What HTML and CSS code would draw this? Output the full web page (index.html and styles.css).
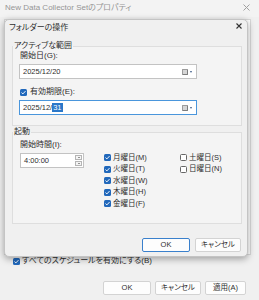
FILE: index.html
```html
<!DOCTYPE html>
<html lang="ja">
<head>
<meta charset="utf-8">
<link rel="stylesheet" href="styles.css">
</head>
<body>
<div class="window">
  <div class="titlebar">
    <span class="title">New Data Collector Setのプロパティ</span>
    <svg class="x-outer" width="7" height="7" viewBox="0 0 7 7"><path d="M0.5 0.5 L6.5 6.5 M6.5 0.5 L0.5 6.5" stroke="#a0a0a0" stroke-width="1"/></svg>
  </div>
  <div class="tabpage"></div>
  <div class="outer-check">
    <span class="cb on"><svg viewBox="0 0 8 8"><path d="M1.7 4.1 L3.3 5.6 L6.3 2.4" stroke="#fff" stroke-width="1.1" fill="none"/></svg></span>
    <span>すべてのスケジュールを有効にする(B)</span>
  </div>
  <div class="footer">
    <button class="btn w48">OK</button>
    <button class="btn w46">キャンセル</button>
    <button class="btn w41">適用(A)</button>
  </div>

  <div class="modal">
    <div class="modal-head">
      <span>フォルダーの操作</span>
      <svg class="x-inner" width="6" height="6" viewBox="0 0 6 6"><path d="M0.5 0.5 L5.5 5.5 M5.5 0.5 L0.5 5.5" stroke="#333" stroke-width="1.1"/></svg>
    </div>

    <fieldset class="group g1">
      <legend>アクティブな範囲</legend>
      <div class="lbl">開始日(G):</div>
      <div class="field date">
        <span class="val">2025/12/20</span>
        <span class="cal"></span>
        <span class="tri"></span>
      </div>
      <div class="chkrow">
        <span class="cb on"><svg viewBox="0 0 8 8"><path d="M1.7 4.1 L3.3 5.6 L6.3 2.4" stroke="#fff" stroke-width="1.1" fill="none"/></svg></span>
        <span>有効期限(E):</span>
      </div>
      <div class="field date focus">
        <span class="val">2025/12/<span class="sel">31</span></span>
        <span class="cal"></span>
        <span class="tri"></span>
      </div>
    </fieldset>

    <fieldset class="group g2">
      <legend>起動</legend>
      <div class="lbl lbl2">開始時間(I):</div>
      <div class="startrow">
        <div class="field time">
          <span class="val">4:00:00</span>
          <span class="spin">
            <span class="sp up"></span>
            <span class="sp down"></span>
          </span>
        </div>
        <div class="days">
          <div class="day"><span class="cb on"><svg viewBox="0 0 8 8"><path d="M1.7 4.1 L3.3 5.6 L6.3 2.4" stroke="#fff" stroke-width="1.1" fill="none"/></svg></span><span>月曜日(M)</span></div>
          <div class="day"><span class="cb on"><svg viewBox="0 0 8 8"><path d="M1.7 4.1 L3.3 5.6 L6.3 2.4" stroke="#fff" stroke-width="1.1" fill="none"/></svg></span><span>火曜日(T)</span></div>
          <div class="day"><span class="cb on"><svg viewBox="0 0 8 8"><path d="M1.7 4.1 L3.3 5.6 L6.3 2.4" stroke="#fff" stroke-width="1.1" fill="none"/></svg></span><span>水曜日(W)</span></div>
          <div class="day"><span class="cb on"><svg viewBox="0 0 8 8"><path d="M1.7 4.1 L3.3 5.6 L6.3 2.4" stroke="#fff" stroke-width="1.1" fill="none"/></svg></span><span>木曜日(H)</span></div>
          <div class="day"><span class="cb on"><svg viewBox="0 0 8 8"><path d="M1.7 4.1 L3.3 5.6 L6.3 2.4" stroke="#fff" stroke-width="1.1" fill="none"/></svg></span><span>金曜日(F)</span></div>
          <div class="day"><span class="cb off"></span><span>土曜日(S)</span></div>
          <div class="day"><span class="cb off"></span><span>日曜日(N)</span></div>
        </div>
      </div>
    </fieldset>

    <div class="modal-btns">
      <button class="btn default w48">OK</button>
      <button class="btn w46">キャンセル</button>
    </div>
  </div>
</div>
</body>
</html>
```

FILE: styles.css
```css
html, body {
  margin: 0;
  padding: 0;
}
body {
  width: 259px;
  height: 300px;
  overflow: hidden;
  background: #f0f0f0;
  font-family: "Liberation Sans", "Noto Sans CJK JP", sans-serif;
  font-size: 8px;
  line-height: 10px;
  color: #2e2e2e;
  font-feature-settings: "palt";
}
.window {
  position: relative;
  height: 300px;
  display: flex;
  flex-direction: column;
}
.titlebar {
  height: 17px;
  flex: none;
  display: flex;
  align-items: center;
  justify-content: space-between;
  padding: 0 9px 2px 5px;
  box-sizing: border-box;
  color: #959595;
  background: #f3f3f3;
}
.tabpage {
  flex: none;
  height: 236px;
  margin: 2px 8px 0 4px;
  box-sizing: border-box;
  background: #ffffff;
  border: 1px solid #d9d9d9;
}
.outer-check {
  flex: none;
  display: flex;
  align-items: center;
  gap: 2px;
  height: 12px;
  margin: 0 0 0 13px;
}
.footer {
  margin-top: auto;
  margin-bottom: 5px;
  display: flex;
  justify-content: flex-end;
  gap: 4px;
  padding-right: 13px;
}
.btn {
  height: 14px;
  padding: 0;
  box-sizing: border-box;
  border: 1px solid #d3d3d3;
  border-radius: 2px;
  background: #fdfdfd;
  font: inherit;
  font-size: 7.5px;
  line-height: 12px;
  color: #2e2e2e;
  font-feature-settings: "palt";
}
.w48 { width: 48px; }
.w46 { width: 46px; }
.w41 { width: 41px; }
.btn.default {
  border-color: #3a80cc;
}

/* checkbox */
.cb {
  width: 7px;
  height: 7px;
  flex: none;
  box-sizing: border-box;
  border-radius: 1.5px;
  display: inline-flex;
}
.cb svg {
  width: 7px;
  height: 7px;
}
.cb.on {
  background: #2168bb;
}
.cb.off {
  background: #ffffff;
  border: 1px solid #666666;
}

/* modal */
.modal {
  position: absolute;
  left: 4px;
  top: 19px;
  width: 244px;
  height: 238px;
  box-sizing: border-box;
  background: #f0f0f0;
  border: 1px solid #c4c4c4;
  border-radius: 5px;
  box-shadow: 0 2px 7px rgba(0, 0, 0, 0.35);
}
.modal-head {
  height: 13px;
  display: flex;
  align-items: center;
  justify-content: space-between;
  padding: 1px 5px 0 4px;
}
.x-inner {
  margin-top: -4px;
}
.group {
  margin: 7px 5px 0 7px;
  padding: 0 6px 10px 6px;
  border: 1px solid #dedede;
  background: #f4f4f4;
  min-width: 0;
}
.group legend {
  padding: 0 1px;
  margin-left: -6px;
  line-height: 10px;
}
.g2 {
  margin-top: 1px;
  padding-bottom: 13px;
}
.lbl {
  height: 10px;
  padding-left: 1px;
}
.lbl2 {
  margin-top: 3px;
}
.field {
  box-sizing: border-box;
  height: 15px;
  background: #ffffff;
  border: 1px solid #c3c3c3;
  display: flex;
  align-items: center;
  padding-left: 3px;
  font-size: 7.5px;
}
.date {
  width: 178px;
  margin-top: 3px;
}
.date.focus {
  border-color: #4a96dc;
}
.val {
  flex: 1;
  line-height: 11px;
}
.sel {
  background: #2a78c9;
  color: #ffffff;
  padding: 0 1px;
}
.cal {
  width: 6px;
  height: 6px;
  box-sizing: border-box;
  border: 1px solid #9c9c9c;
  border-right-color: #7d7d7d;
  border-bottom-color: #7d7d7d;
  background: #d6d6d6;
  border-radius: 1px;
}
.tri {
  width: 0;
  height: 0;
  margin: 0 4px 0 2px;
  border-left: 1.5px solid transparent;
  border-right: 1.5px solid transparent;
  border-top: 2px solid #3b5a86;
}
.chkrow {
  margin-top: 8px;
  height: 10px;
  display: flex;
  align-items: center;
  gap: 3px;
  padding-left: 1px;
}
.startrow {
  display: flex;
  align-items: flex-start;
}
.time {
  width: 64px;
  margin-top: 3px;
  margin-left: 1px;
}
.spin {
  display: flex;
  flex-direction: column;
  gap: 1px;
  margin-right: 1px;
}
.sp {
  width: 7px;
  height: 5px;
  box-sizing: border-box;
  border: 1px solid #b5b5b5;
  background: #f4f4f4;
  display: flex;
  align-items: center;
  justify-content: center;
}
.sp::after {
  content: "";
  width: 0;
  height: 0;
  border-left: 1.5px solid transparent;
  border-right: 1.5px solid transparent;
}
.sp.up::after {
  border-bottom: 1.5px solid #333;
}
.sp.down::after {
  border-top: 1.5px solid #333;
}
.days {
  margin: 2px 0 0 20px;
  display: grid;
  grid-template-columns: 76px auto;
  grid-template-rows: repeat(5, 11.5px);
  grid-auto-flow: column;
}
.day {
  display: flex;
  align-items: center;
  gap: 2px;
  font-size: 7.5px;
}
.modal-btns {
  display: flex;
  justify-content: flex-end;
  gap: 5px;
  margin-top: 14px;
  padding-right: 6px;
}
```
